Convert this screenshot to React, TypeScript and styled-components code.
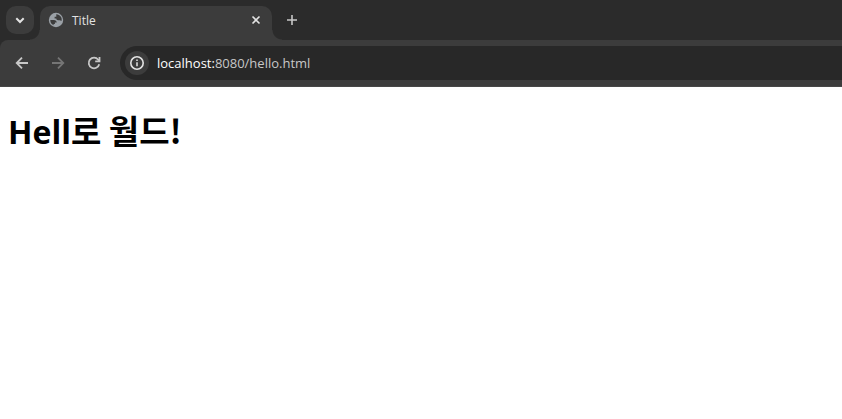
import React from "react";
import styled, { createGlobalStyle } from "styled-components";

const GlobalStyle = createGlobalStyle`
  * { box-sizing: border-box; }
  body {
    margin: 0;
    background: #ffffff;
    font-family: "Noto Sans", "Noto Sans CJK KR", sans-serif;
  }
`;

const TabStrip = styled.header`
  display: flex;
  align-items: flex-end;
  height: 40px;
  padding-left: 6px;
  background: #2b2b2b;
`;

const IconButton = styled.button<{ $size: number; $color?: string; $fill?: string; $radius?: number }>`
  display: flex;
  flex: none;
  align-items: center;
  justify-content: center;
  width: ${(p) => p.$size}px;
  height: ${(p) => p.$size}px;
  padding: 0;
  border: 0;
  border-radius: ${(p) => p.$radius ?? 14}px;
  background: ${(p) => p.$fill ?? "transparent"};
  color: ${(p) => p.$color ?? "#c7c7c7"};
`;

const TabSearch = styled(IconButton)`
  margin: 0 6px 6px 0;
`;

const Tab = styled.div`
  position: relative;
  display: flex;
  align-items: center;
  gap: 8px;
  width: 232px;
  height: 34px;
  padding: 0 8px 6px;
  border-radius: 10px 10px 0 0;
  background: #3c3c3c;
  color: #e3e3e3;

  &::before,
  &::after {
    content: "";
    position: absolute;
    bottom: 0;
    width: 10px;
    height: 10px;
  }
  &::before {
    right: 100%;
    background: radial-gradient(circle at 0 0, transparent 9px, #3c3c3c 10px);
  }
  &::after {
    left: 100%;
    background: radial-gradient(circle at 100% 0, transparent 9px, #3c3c3c 10px);
  }
`;

const TabTitle = styled.span`
  flex: 1;
  padding-top: 2px;
  font-family: "Open Sans", "Noto Sans", sans-serif;
  font-size: 12px;
  line-height: 16px;
`;

const NewTab = styled(IconButton)`
  margin: 0 0 6px 6px;
`;

const ToolbarBack = styled.div`
  background: #2b2b2b;
`;

const Toolbar = styled.nav`
  display: flex;
  align-items: center;
  gap: 8px;
  height: 47px;
  border-bottom: 1px solid #474747;
  padding-left: 8px;
  border-top-left-radius: 8px;
  background: #3c3c3c;
`;

const AddressBar = styled.div`
  display: flex;
  flex: 1;
  align-items: center;
  gap: 8px;
  height: 34px;
  margin-left: 4px;
  padding-left: 5px;
  border-radius: 17px 0 0 17px;
  background: #282828;
`;

const Address = styled.a`
  color: #c7c7c7;
  font-family: "Open Sans", "Noto Sans", sans-serif;
  font-size: 13px;
  line-height: 20px;
  text-decoration: none;
`;

const Host = styled.span`
  color: #ffffff;
`;

const Page = styled.main`
  padding: 20px 8px;
`;

const Heading = styled.h1`
  margin: 0;
  color: #000000;
  font-family: "Noto Sans CJK KR", sans-serif;
  font-size: 33px;
  font-weight: 700;
  line-height: 46px;
`;

const Latin = styled.span`
  font-family: "Open Sans", sans-serif;
  font-size: 32px;
`;

const Stroke = ({ d, width = 2 }: { d: string; width?: number }) => (
  <svg width="16" height="16" viewBox="0 0 16 16" fill="none" stroke="currentColor" strokeWidth={width} aria-hidden="true">
    <path d={d} />
  </svg>
);

const Globe = () => (
  <svg width="16" height="16" viewBox="0 0 16 16" aria-hidden="true">
    <circle cx="8" cy="8" r="7.2" fill="#9aa0a6" />
    <path
      d="M8.2 2.3c2.2 0 4.3 1.3 5.1 3.3.5 1.2.5 2.4.2 3.4l-1.6-.8H10c-1 0-1.7-.8-1.7-1.7H6.6V4.8h1.7V3.5ZM2.3 8h3.6c1.7 0 2.8.9 2.8 2.4H6.9v1.5H5.6v1.4A5.8 5.8 0 0 1 2.3 8Z"
      fill="#3c3c3c"
    />
  </svg>
);

const Reload = () => (
  <svg width="16" height="16" viewBox="0 0 16 16" fill="none" stroke="currentColor" strokeWidth="1.8" aria-hidden="true">
    <path d="M13.2 9.2A5.3 5.3 0 1 1 12.2 4.7L13.5 6" />
    <path d="M13.5 2v4.3H9.2" />
  </svg>
);

const Info = () => (
  <svg width="16" height="16" viewBox="0 0 16 16" fill="none" stroke="currentColor" aria-hidden="true">
    <circle cx="8" cy="8" r="6.2" strokeWidth="1.6" />
    <path d="M8 7.2v4M8 4.6v1.5" strokeWidth="1.5" />
  </svg>
);

export default function App() {
  return (
    <>
      <GlobalStyle />
      <TabStrip>
        <TabSearch $size={28} $radius={10} $fill="#3c3c3c" $color="#e3e3e3" aria-label="Search tabs">
          <Stroke d="M4.3 6.3 8 10l3.7-3.7" />
        </TabSearch>
        <Tab>
          <Globe />
          <TabTitle>Title</TabTitle>
          <IconButton $size={16} $color="#e3e3e3" aria-label="Close tab">
            <Stroke d="m4.5 4.5 7 7m0-7-7 7" width={1.6} />
          </IconButton>
        </Tab>
        <NewTab $size={28} aria-label="New tab">
          <Stroke d="M8 3v10M3 8h10" width={1.6} />
        </NewTab>
      </TabStrip>
      <ToolbarBack>
        <Toolbar>
          <IconButton $size={28} aria-label="Back">
            <Stroke d="M14 8H3M8 2.7 2.7 8 8 13.3" width={1.8} />
          </IconButton>
          <IconButton $size={28} $color="#757575" aria-label="Forward">
            <Stroke d="M2 8h11M8 2.7 13.3 8 8 13.3" width={1.8} />
          </IconButton>
          <IconButton $size={28} aria-label="Reload">
            <Reload />
          </IconButton>
          <AddressBar>
            <IconButton $size={24} $fill="#3c3c3c" $color="#e3e3e3" aria-label="Site information">
              <Info />
            </IconButton>
            <Address href="#">
              <Host>localhost:</Host>8080/hello.html
            </Address>
          </AddressBar>
        </Toolbar>
      </ToolbarBack>
      <Page>
        <Heading>
          <Latin>Hell</Latin>로 월드!
        </Heading>
      </Page>
    </>
  );
}
